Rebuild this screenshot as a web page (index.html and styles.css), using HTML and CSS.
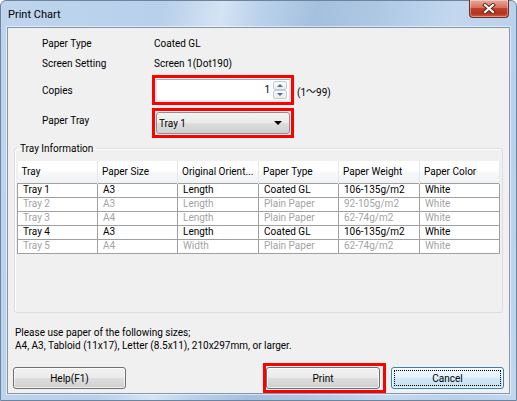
FILE: index.html
```html
<!DOCTYPE html>
<html lang="en">
<head>
    <meta charset="UTF-8">
    <title>Print Chart</title>
    <link rel="stylesheet" href="styles.css">
</head>
<body>
    <div class="window">
        <div class="titlebar">
            <span class="title">Print Chart</span>
            <button class="close-btn" title="Close">
                <svg width="14" height="11" viewBox="0 0 14 11">
                    <path d="M3 2 L11 9 M11 2 L3 9" stroke="#5a2a22" stroke-width="4" stroke-linecap="square"/>
                    <path d="M3 2 L11 9 M11 2 L3 9" stroke="#ffffff" stroke-width="2" stroke-linecap="square"/>
                </svg>
            </button>
        </div>
        <div class="client">
            <div class="settings">
                <div class="row">
                    <span class="label">Paper Type</span>
                    <span class="value">Coated GL</span>
                </div>
                <div class="row">
                    <span class="label">Screen Setting</span>
                    <span class="value">Screen 1(Dot190)</span>
                </div>
                <div class="row row-tall">
                    <span class="label">Copies</span>
                    <div class="highlight">
                        <div class="spin-box">
                            <span class="spin-value">1</span>
                            <div class="spin-buttons">
                                <span class="spin-btn spin-up"></span>
                                <span class="spin-btn spin-down"></span>
                            </div>
                        </div>
                    </div>
                    <span class="range">(1<span class="wave">～</span>99)</span>
                </div>
                <div class="row row-tall row-tray">
                    <span class="label label-raise">Paper Tray</span>
                    <div class="highlight">
                        <div class="combo">
                            <span class="combo-text">Tray 1</span>
                            <span class="combo-arrow"></span>
                        </div>
                    </div>
                </div>
            </div>

            <fieldset class="group">
                <legend>Tray Information</legend>
                <div class="list">
                    <table class="tray-table">
                        <thead>
                            <tr>
                                <th>Tray</th>
                                <th>Paper Size</th>
                                <th>Original Orient...</th>
                                <th>Paper Type</th>
                                <th>Paper Weight</th>
                                <th>Paper Color</th>
                            </tr>
                        </thead>
                        <tbody>
                            <tr>
                                <td>Tray 1</td><td>A3</td><td>Length</td><td>Coated GL</td><td>106-135g/m2</td><td>White</td>
                            </tr>
                            <tr class="disabled">
                                <td>Tray 2</td><td>A3</td><td>Length</td><td>Plain Paper</td><td>92-105g/m2</td><td>White</td>
                            </tr>
                            <tr class="disabled">
                                <td>Tray 3</td><td>A4</td><td>Length</td><td>Plain Paper</td><td>62-74g/m2</td><td>White</td>
                            </tr>
                            <tr>
                                <td>Tray 4</td><td>A3</td><td>Length</td><td>Coated GL</td><td>106-135g/m2</td><td>White</td>
                            </tr>
                            <tr class="disabled">
                                <td>Tray 5</td><td>A4</td><td>Width</td><td>Plain Paper</td><td>62-74g/m2</td><td>White</td>
                            </tr>
                        </tbody>
                    </table>
                </div>
            </fieldset>

            <p class="note">Please use paper of the following sizes;<br>A4, A3, Tabloid (11x17), Letter (8.5x11), 210x297mm, or larger.</p>

            <div class="buttons">
                <button class="btn">Help(F1)</button>
                <div class="highlight highlight-print">
                    <button class="btn">Print</button>
                </div>
                <button class="btn btn-default">Cancel</button>
            </div>
        </div>
    </div>
</body>
</html>
```

FILE: styles.css
```css
html, body {
    margin: 0;
    padding: 0;
}

body {
    font-family: Roboto, "Liberation Sans", "Noto Sans CJK JP", sans-serif;
    font-size: 10px;
    color: #000;
    background: #ffffff;
}

.window {
    width: 517px;
    height: 401px;
    box-sizing: border-box;
    padding: 0 6px 6px 6px;
    display: flex;
    flex-direction: column;
    border: 1px solid #6d84a0;
    border-radius: 6px 6px 0 0;
    background: linear-gradient(100deg, #bed5ed 0%, #b8d0ea 28%, #d4e4f4 38%, #bcd3ec 44%, #a5c0de 54%, #adc7e3 64%, #c3d8ef 78%, #b9d0ea 90%, #c2d7ee 100%);
}

.titlebar {
    height: 26px;
    display: flex;
    align-items: flex-start;
}

.title {
    padding: 7px 0 0 1px;
    font-size: 11px;
    line-height: 13px;
}

.close-btn {
    margin-left: auto;
    margin-right: 1px;
    margin-top: -1px;
    width: 40px;
    height: 18px;
    padding: 0;
    border: 1px solid #6b2f27;
    border-top: none;
    border-radius: 0 0 4px 4px;
    background: linear-gradient(#e9a99c, #d8705d 45%, #c2402a 50%, #b7321e 80%, #d0614b);
    display: flex;
    align-items: center;
    justify-content: center;
    box-shadow: inset 0 0 0 1px rgba(255, 255, 255, 0.35);
}

.client {
    flex: 1;
    display: flex;
    flex-direction: column;
    background: #f0f0f0;
    border: 1px solid #8696aa;
    box-shadow: 0 0 0 1px rgba(255, 255, 255, 0.55);
}

/* upper settings */
.settings {
    padding: 7px 0 0 34px;
}

.row {
    display: flex;
    align-items: center;
    height: 16px;
    margin-bottom: 4px;
}

.row-tall {
    height: 30px;
    margin-bottom: 3px;
}

.row-tray {
    margin-bottom: 0;
}

.label {
    width: 112px;
    flex-shrink: 0;
}

.label-raise {
    padding-bottom: 6px;
}

.highlight {
    margin-left: -2px;
    width: 142px;
    height: 30px;
    box-sizing: border-box;
    border: 3px solid #ff0000;
    padding: 1px;
}

.spin-box {
    height: 22px;
    box-sizing: border-box;
    border: 1px solid #abadb3;
    border-left-color: #e2e3ea;
    border-right-color: #dbdfe6;
    border-bottom-color: #e3e9ef;
    background: #fff;
    display: flex;
    align-items: stretch;
}

.spin-value {
    flex: 1;
    text-align: right;
    line-height: 20px;
    padding-right: 3px;
}

.spin-buttons {
    width: 14px;
    margin: 1px 2px 1px 0;
    display: flex;
    flex-direction: column;
}

.spin-btn {
    flex: 1;
    border: 1px solid #c5cbd3;
    border-radius: 2px;
    background: linear-gradient(#fbfbfb, #e9ecef);
    display: flex;
    align-items: center;
    justify-content: center;
}

.spin-up::before {
    content: "";
    border-left: 3px solid transparent;
    border-right: 3px solid transparent;
    border-bottom: 3px solid #4d6b95;
}

.spin-down::before {
    content: "";
    border-left: 3px solid transparent;
    border-right: 3px solid transparent;
    border-top: 3px solid #4d6b95;
}

.range {
    margin-left: 3px;
    white-space: nowrap;
}

.wave {
    font-family: "Noto Sans CJK JP", sans-serif;
    display: inline-block;
    width: 10px;
    overflow: hidden;
    vertical-align: bottom;
}

.combo {
    height: 22px;
    box-sizing: border-box;
    border: 1px solid #8e8f8f;
    border-radius: 3px;
    background: linear-gradient(#f2f2f2, #ebebeb 48%, #dddddd 52%, #cfcfcf);
    display: flex;
    align-items: center;
    padding: 0 7px 0 2px;
}

.combo-text {
    flex: 1;
}

.combo-arrow {
    border-left: 4px solid transparent;
    border-right: 4px solid transparent;
    border-top: 4px solid #000;
}

/* tray information group */
.group {
    margin: 4px 6px 0 6px;
    padding: 0 2px;
    border: 1px solid #d5dfe5;
    border-radius: 3px;
    box-shadow: inset 1px 1px 0 #fff;
    min-width: 0;
}

.group legend {
    padding: 0 3px;
    margin-left: 0;
    line-height: 13px;
}

.list {
    height: 157px;
    padding-top: 6px;
    box-sizing: border-box;
}

.tray-table {
    width: 482px;
    table-layout: fixed;
    border-collapse: collapse;
    font-size: 10px;
}

.tray-table th {
    height: 22px;
    padding: 0 0 0 4px;
    font-weight: normal;
    text-align: left;
    white-space: nowrap;
    overflow: hidden;
    background: linear-gradient(#ffffff, #ffffff 45%, #f7f8fa 50%, #f1f2f4);
    border-right: 1px solid #e3e8ee;
    box-sizing: border-box;
}

.tray-table th:nth-child(1) { width: 80px; }
.tray-table th:nth-child(2) { width: 80px; }
.tray-table th:nth-child(3) { width: 81px; }
.tray-table th:nth-child(4) { width: 80px; }
.tray-table th:nth-child(5) { width: 81px; }
.tray-table th:nth-child(6) { width: 80px; }

.tray-table td {
    height: 13px;
    padding: 0 0 0 5px;
    line-height: 12px;
    background: #fff;
    border: 1px solid #a0a0a0;
    white-space: nowrap;
}

.tray-table tr.disabled td {
    color: #a3a3a3;
}

.note {
    margin: 13px 0 0 7px;
    line-height: 13px;
}

/* bottom buttons */
.buttons {
    margin-top: auto;
    display: flex;
    align-items: center;
    padding: 0 5px 0 5px;
}

.btn {
    width: 113px;
    height: 22px;
    padding: 0;
    font-family: inherit;
    font-size: 10px;
    color: #000;
    border: 1px solid #707070;
    border-radius: 3px;
    background: linear-gradient(#f2f2f2, #ebebeb 48%, #dddddd 52%, #cfcfcf);
    box-shadow: inset 0 0 0 1px rgba(255, 255, 255, 0.7);
}

.highlight-print {
    margin-left: auto;
    width: 123px;
    height: 30px;
    padding: 1px 3px 1px 0;
}

.highlight-print .btn {
    width: 114px;
}

.btn-default {
    margin-left: 5px;
    border-color: #3c7fb1;
    background: linear-gradient(#f1f8fd, #e2f1fb 48%, #d1e9f7 52%, #c3e0f3);
    outline: 1px dotted #000;
    outline-offset: -4px;
}
```
